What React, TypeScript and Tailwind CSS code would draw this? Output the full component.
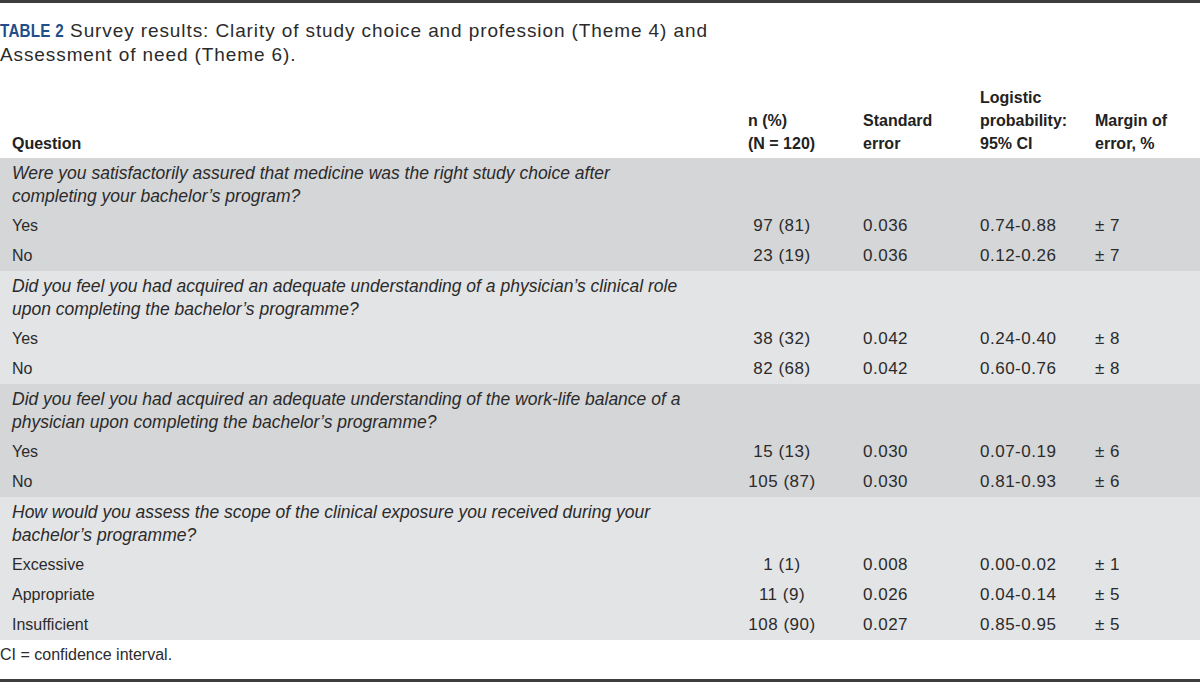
import React from "react";

type Row = { label: string; n: string; se: string; ci: string; moe: string };
type Group = { q: React.ReactNode; rows: Row[]; bg: string };

const groups: Group[] = [
  {
    q: (
      <>
        Were you satisfactorily assured that medicine was the right study choice after
        <br />
        completing your bachelor’s program?
      </>
    ),
    bg: "bg-[#d5d6d8]",
    rows: [
      { label: "Yes", n: "97 (81)", se: "0.036", ci: "0.74-0.88", moe: "± 7" },
      { label: "No", n: "23 (19)", se: "0.036", ci: "0.12-0.26", moe: "± 7" },
    ],
  },
  {
    q: (
      <>
        Did you feel you had acquired an adequate understanding of a physician’s clinical role
        <br />
        upon completing the bachelor’s programme?
      </>
    ),
    bg: "bg-[#e3e4e6]",
    rows: [
      { label: "Yes", n: "38 (32)", se: "0.042", ci: "0.24-0.40", moe: "± 8" },
      { label: "No", n: "82 (68)", se: "0.042", ci: "0.60-0.76", moe: "± 8" },
    ],
  },
  {
    q: (
      <>
        Did you feel you had acquired an adequate understanding of the work-life balance of a
        <br />
        physician upon completing the bachelor’s programme?
      </>
    ),
    bg: "bg-[#d5d6d8]",
    rows: [
      { label: "Yes", n: "15 (13)", se: "0.030", ci: "0.07-0.19", moe: "± 6" },
      { label: "No", n: "105 (87)", se: "0.030", ci: "0.81-0.93", moe: "± 6" },
    ],
  },
  {
    q: (
      <>
        How would you assess the scope of the clinical exposure you received during your
        <br />
        bachelor’s programme?
      </>
    ),
    bg: "bg-[#e3e4e6]",
    rows: [
      { label: "Excessive", n: "1 (1)", se: "0.008", ci: "0.00-0.02", moe: "± 1" },
      { label: "Appropriate", n: "11 (9)", se: "0.026", ci: "0.04-0.14", moe: "± 5" },
      { label: "Insufficient", n: "108 (90)", se: "0.027", ci: "0.85-0.95", moe: "± 5" },
    ],
  },
];

const cols = "grid grid-cols-[736px_115px_117px_115px_1fr] pl-3";

export default function App() {
  return (
    <div
      className="w-[1200px] h-[682px] bg-white text-[#2b2b2b] overflow-hidden flex flex-col"
      style={{ fontFamily: '"Liberation Sans", Arial, sans-serif' }}
    >
      <div className="h-[3px] bg-[#3d3d3d] shrink-0" />
      <div className="shrink-0 pt-4 h-[67px] text-[19px] leading-[24px] tracking-[0.9px] text-[#2b2b2b]">
        <span className="inline-block font-bold text-[#1f4e8a] tracking-[0.3px] scale-x-[0.8] origin-left -mr-[16px]">
          TABLE 2
        </span>{" "}
        Survey results: Clarity of study choice and profession (Theme 4) and
        <br />
        Assessment of need (Theme 6).
      </div>
      <div
        className={`${cols} shrink-0 h-[88px] items-end pb-[3px] text-[16px] leading-[23px] font-bold text-[#222]`}
      >
        <div>Question</div>
        <div>
          n (%)
          <br />
          (N = 120)
        </div>
        <div>
          Standard
          <br />
          error
        </div>
        <div>
          Logistic
          <br />
          probability:
          <br />
          95% CI
        </div>
        <div>
          Margin of
          <br />
          error, %
        </div>
      </div>
      {groups.map((g, i) => (
        <div key={i} className={`${g.bg} shrink-0 text-[16px]`}>
          <div className="pl-3 pt-[4px] pb-[3px] h-[53px] italic text-[17.5px] leading-[23px] text-[#2b2b2b]">
            {g.q}
          </div>
          {g.rows.map((r, j) => (
            <div key={j} className={`${cols} h-[30px] items-center leading-[20px]`}>
              <div>{r.label}</div>
              <div className="w-[68px] text-center text-[17px] tracking-[0.5px] whitespace-nowrap">{r.n}</div>
              <div className="text-[17px] tracking-[0.5px]">{r.se}</div>
              <div className="text-[17px] tracking-[0.5px]">{r.ci}</div>
              <div className="text-[17px] tracking-[0.5px]">{r.moe}</div>
            </div>
          ))}
        </div>
      ))}
      <div className="shrink-0 pt-[3px] h-[39px] text-[16px] leading-[24px]">CI = confidence interval.</div>
      <div className="h-[3px] bg-[#3d3d3d] shrink-0" />
    </div>
  );
}
